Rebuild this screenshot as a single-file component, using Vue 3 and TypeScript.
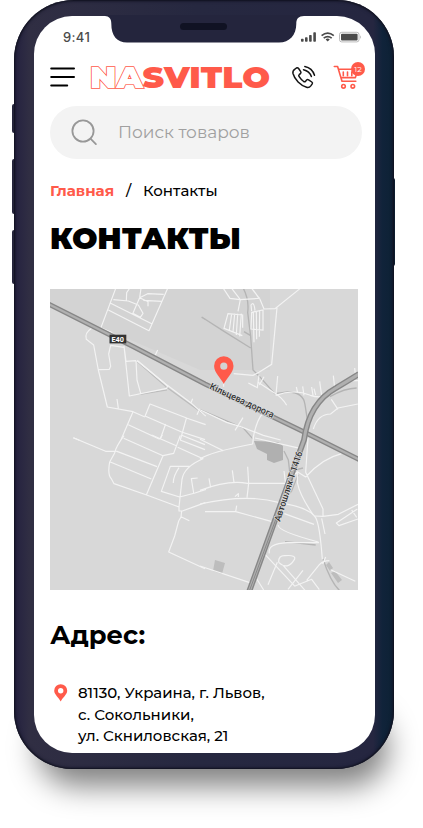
<script setup lang="ts">
interface Crumb {
  label: string
  home: boolean
}

const crumbs: Crumb[] = [
  { label: 'Главная', home: true },
  { label: 'Контакты', home: false },
]
const address: string[] = ['81130, Украина, г. Львов,', 'с. Сокольники,', 'ул. Скниловская, 21']
const cartCount = 12
</script>

<template>
  <main class="stage">
    <div class="shadow"></div>
    <i class="key key-mute"></i>
    <i class="key key-up"></i>
    <i class="key key-down"></i>
    <i class="key key-power"></i>
    <div class="phone">
      <div class="screen">
        <div class="status">
          <span class="time">9:41</span>
          <svg class="signals" width="62" height="12" viewBox="300 31 62 12">
            <g fill="#4a4a4a">
              <rect x="301" y="38.7" width="2.6" height="3" rx=".7" />
              <rect x="305" y="37.2" width="2.6" height="4.5" rx=".7" />
              <rect x="309.1" y="35" width="2.6" height="6.7" rx=".7" />
              <rect x="313.3" y="32.2" width="2.6" height="9.5" rx=".7" />
              <path d="M325.6 39.4q2-1.6 4.200 0l-2.100 2.200z" />
              <rect x="341" y="33.7" width="16.6" height="6.8" rx="1" />
            </g>
            <g fill="none" stroke="#4a4a4a" stroke-width="1.7">
              <path d="M321.600 35.700q6.100-5.200 12.200 0M323.700 38.200q4-3.300 8 0" />
            </g>
            <rect x="339.5" y="32.3" width="19.5" height="9.6" rx="2.2" fill="none" stroke="#aaa" stroke-width=".8" />
            <path d="M360 35.300q1.700 1.700 0 3.600z" fill="#aaa" />
          </svg>
        </div>

        <header class="header">
          <svg class="menu" width="26" height="22" viewBox="0 0 26 22" stroke="#000" stroke-width="2" stroke-linecap="round">
            <path d="M1.200 2.600H24M1.200 11H24M1.200 19.500H17.200" />
          </svg>
          <svg class="logo" width="182" height="40" viewBox="90 57 182 40">
            <text x="90" y="88" textLength="53" lengthAdjust="spacingAndGlyphs" class="logo-outline">NA</text>
            <text x="142.5" y="88.3" textLength="127.5" lengthAdjust="spacingAndGlyphs" class="logo-solid">SVITLO</text>
          </svg>
          <svg class="call" width="26" height="26" viewBox="291 64 26 26" fill="none" stroke="#151515" stroke-width="1.5" stroke-linecap="round" stroke-linejoin="round">
            <path d="M294.600 69.400l1.800-1.400q1.300-.7 2.200.5l2.100 3.200q.7 1.100-.3 2l-1.200 1q-.8.7-.2 1.700 2 3.200 4.700 5.100 1.100.7 1.900-.3l1-1.100q.9-1 2-.3l3.200 2.200q1.100.8.4 1.900l-1.400 2q-1.600 2.100-4.200 1.400-4.700-1.300-8.500-5.200-3.900-4.100-5.100-8.600-.6-2.500 1.600-4.100z" />
            <path d="M304.800 66.600q7.400 1.600 9.700 8.600M303.500 69.700q6 1.400 7.900 6.900" />
          </svg>
          <div class="cart">
            <svg width="26" height="26" viewBox="333 64 26 26" fill="none" stroke="#ff5a4a" stroke-width="1.6" stroke-linecap="round" stroke-linejoin="round">
              <path d="M334.300 66.500h3.300l4.400 14.800h13.800M339 69.300h19M358 69.300l-2.600 8.300h-14" />
              <path d="M343.300 72v3.800M347.500 72v3.800M351.800 72v3.800" />
              <circle cx="343.5" cy="86.3" r="1.8" />
              <circle cx="352.8" cy="86.3" r="1.8" />
            </svg>
            <span class="badge">{{ cartCount }}</span>
          </div>
        </header>

        <div class="search">
          <svg width="28" height="28" viewBox="0 0 28 28" fill="none" stroke="#989898" stroke-width="1.8" stroke-linecap="round">
            <circle cx="12" cy="12" r="10.6" />
            <path d="M19.700 19.900l5.200 5.200" />
          </svg>
          <span class="placeholder">Поиск товаров</span>
        </div>

        <nav class="crumbs">
          <template v-for="(crumb, index) in crumbs" :key="crumb.label">
            <span v-if="index > 0" class="slash">/</span>
            <span :class="crumb.home ? 'crumb-home' : 'crumb-here'">{{ crumb.label }}</span>
          </template>
        </nav>

        <h1 class="title">КОНТАКТЫ</h1>

        <svg class="map" width="308" height="301" viewBox="50 289 308 301">
          <rect x="50" y="289" width="308" height="301" fill="#d8d8d8" />
          <path d="M50 289H270V370H200L50 305z" fill="#d3d3d3" />
          <g fill="#b0b0b0">
            <path d="M254 441l24 1 5 4v14l-9 3-7-3v-6l-10-5z" />
            <path d="M215 560l10 3-3 11-9-3zM326 565l3-3 4 6-3 3zM331 573l4-2 7 9-4 3z" fill="#bdbdbd" />
          </g>

          <g transform="translate(45 285) scale(.33333)" fill="none" stroke-linejoin="round">
            <g stroke="#bcbcbc" stroke-width="3.5">
              <path d="M275 228L365 307 430 354 480 390M284 328l82-13M470 97l12 7" />
            </g>
            <g stroke="#f3f3f3" stroke-width="3.5">
              <path d="M167 130L213 8M205 44l45 4 30 12 14 25-8 12-24-13M288 10l-4 28-20 46M244 48l1-25 10-15M284 38l25 12v14M284 38l24-12 48 2M295 46l56 3M368 10L312 137 190 75M197 55l123 61" />
              <path d="M140 130q-22 14-16 33l22 17 14 75 27 111 77 14 36 16M160 254l33-1 4-9-6-37 6-26 40 6M237 183l6 46 30-2M237 183l16 150 112-23 3-7-93-76M273 228l3 57 12 43M220 370l-4-28" />
              <path d="M277 226l90 75 70 52 45 40M438 353l5-12M456 389l8-18M300 394l15-37 110 42M264 380l-36 84M300 393l110 48 70 23M362 417l-16 45M424 400l-18 65M250 419l94 44M424 399l58 20M85 458l18 8M330 212l8-17M170 130l29 12 10 10" />
            </g>
          </g>

          <g transform="translate(200 285) scale(.33333)" fill="none">
            <g stroke="#b4b4b4" stroke-width="4">
              <path d="M5 96l67 43 80 50M130 10q18 35 13 72l9 73 7 100 20 20 45 51 39-5q47 0 52 38l11 70M132 140l20 12M390 335q43-25 80-26" />
              <path d="M0 374l130 55 28 32" />
            </g>
            <g stroke="#f3f3f3" stroke-width="3.5">
              <path d="M70 10l20 30 30 4 58-4-23-30M95 10l26 34-7 35M178 38l14 34 33-1 75-60M160 15l15 22M231 68l-16 170-38 24-18 9-58-5M177 270l-5 38-27-14M174 292l45 29q27 15 41 40M192 275l-14 25M228 329l5-56M72 130l12-44 44 4v38M84 86l-12 44 55 22M95 86l-7 49M104 86l-5 55M113 86l-4 64M124 86l-5 68M155 82l34-7v60l-36-3zM160 82l2 90M169 80l1 83M179 77l-1 78M155 78l-2-18q9-13 12 17" />
              <path d="M227 331q57-20 104 0 24 8 41 2M289 306l4 18M308 304l4 27M335 306l4 25M342 311l5 19M359 289l6 44M400 272l4 37M464 249l3 27M394 343l20 30M340 432q14-45 52-45l22-18 60-12M71 305l0-15M159 461q11-59 31-77M105 436l24-38M0 374l80 38 40 12 70 27 52 14M474 287h-26" />
            </g>
          </g>

          <g transform="translate(45 435) scale(.33333)" fill="none" stroke="#f3f3f3" stroke-width="3.5" stroke-linejoin="round">
            <path d="M85 8l97 41h28M237 2q-25 34-28 52l-15 27q-7 38 5 50l8 15 98 34 97 36v12l10 0 69-25M304 180L354 62 236 10M210 47l126 48M196 81l123 51M354 62l32-7 20-54M398 37l76 34q-57 24-63 62l-9 83M410 1l70 28M405 15l75 29M346 10l6-10M320 0l74 32M434 94h-58l-27 75 55 17 46-12 33-11M402 98q-18 27-17 46M446 174l-7-43 19-2M410 228l-2 18-7 12-12 45-18 48 109 50M408 245l25 12" />
          </g>

          <g transform="translate(200 435) scale(.33333)" fill="none">
            <g stroke="#b5b5b5" stroke-width="4">
              <path d="M252 48l13 27 4 34 40-10M294 120l-20 50-22 18M255 320l92 10M369 372q22 67 49 94" />
            </g>
            <g stroke="#f3f3f3" stroke-width="3.5" stroke-linejoin="round">
              <path d="M0 72q30-21 158-45l3-26M165 9l135 31M0 13l70 34M0 166q85-32 142-21h115M0 207q140-32 239-4 90 15 108 45 12 20 20 125M15 230h92l120 33M107 230l3-18M32 158l-5-28M102 143l-5-37M141 188l5-43-3-50M105 185l10-9v10" />
              <path d="M324 10l-7 102 52 110v22l-25-1M252 108l5 40 35-38 25 16q50-56 108-70M292 112v31q8 40 48 97M253 236l89 32M235 270q-4 18 120 51M369 244l46-6 59-30M365 250l10 47M208 355q-6-29 54-32h95M0 393l165 55M195 358l90 96M163 420l28 45M232 382l-28 67M236 382q-1-22 20-20 34-3 27 12-20 33-47 8M250 392l65 74M264 463l45-57M285 453l50-20 23 31M320 436l38-47q12-12 30-12M377 366l-9 21M392 404l74 35M472 222l-63 42 8 8 57-20M455 225l15 22" />
            </g>
          </g>

          <g fill="none">
            <path d="M48 303.700L134 347 205 384 302 431 362 461" stroke="#878787" stroke-width="5" />
            <path d="M48 303.700L134 347 205 384 302 431 362 461" stroke="#b0b0b0" stroke-width="2.2" />
            <path d="M249 592L304 440q5-37 32-52 10-6 23-14" stroke="#878787" stroke-width="5.8" />
            <path d="M249 592L304 440q5-37 32-52 10-6 23-14" stroke="#b0b0b0" stroke-width="3" />
            <path d="M249 592L277 516" stroke="#777" stroke-width=".7" />
          </g>
          <rect x="109.5" y="334.7" width="16.8" height="8.7" fill="#333" />
          <text x="111.5" y="341.5" class="shield" textLength="12.5" lengthAdjust="spacingAndGlyphs">E40</text>
          <text class="road" transform="translate(209 388.500) rotate(25)" textLength="70" lengthAdjust="spacingAndGlyphs">Кільцева дорога</text>
          <text class="road" transform="translate(280 522) rotate(-72)" textLength="73" lengthAdjust="spacingAndGlyphs">Автошлях Т 1416</text>
          <path d="M223.800 384c-2.400-5.200-9.700-11.500-9.700-18.100a9.700 9.700 0 0 1 19.400 0c0 6.600-7.300 12.900-9.700 18.100zM223.800 362.600a3.600 3.600 0 1 0 0 7.200 3.600 3.600 0 0 0 0-7.200z" fill="#ff5a4a" fill-rule="evenodd" />
        </svg>

        <h2 class="subtitle">Адрес:</h2>
        <div class="address">
          <svg width="14" height="18" viewBox="0 0 14 18">
            <path d="M6.700 17.500C5 13.800.2 10.500.2 6.700a6.500 6.500 0 0 1 13 0c0 3.800-4.800 7.100-6.500 10.800zM6.700 4a2.700 2.700 0 1 0 0 5.400 2.700 2.700 0 0 0 0-5.400z" fill="#ff5a4a" fill-rule="evenodd" />
          </svg>
          <p><span v-for="line in address" :key="line">{{ line }}</span></p>
        </div>
      </div>
      <svg class="notch" width="200" height="28" viewBox="105 15 200 28">
        <path d="M105 15v1c4 .2 6.300 2.600 6.300 7.500C111.300 36 117 42.500 127 42.500h152c10.500 0 17.300-7.500 17.300-18.800 0-5 2.300-7.500 7.700-7.700v-1z" fill="#24253d" />
        <rect x="180" y="23" width="47" height="7" rx="3.500" fill="#101223" />
      </svg>
    </div>
  </main>
</template>

<style>
body {
  background: #fff;
  overflow: hidden;
}
</style>

<style scoped>
.stage {
  position: relative;
  box-sizing: border-box;
  width: 423px;
  height: 828px;
  padding-left: 14px;
  overflow: hidden;
  background: #fff;
  font-family: Montserrat, Inter, "Noto Sans", sans-serif;
  color: #000;
}
.shadow {
  position: absolute;
  left: 38px;
  top: 710px;
  width: 350px;
  height: 76px;
  border-radius: 38px;
  background: rgba(0, 0, 0, 0.5);
  filter: blur(15px);
}
.key {
  position: absolute;
  left: 12px;
  width: 5px;
  border-radius: 2px;
  background: #25243b;
}
.key-mute { top: 104px; height: 29px; }
.key-up { top: 159px; height: 55px; }
.key-down { top: 230px; height: 54px; }
.key-power { left: 390px; top: 178px; width: 5px; height: 88px; background: #0c1c2e; }
.phone {
  position: relative;
  box-sizing: border-box;
  width: 380px;
  height: 769px;
  padding: 16px 19.500px 16px 20px;
  border-radius: 60px 57px 58px 58px;
  background: linear-gradient(90deg, #242140 0, #302e43 4%, #262840 48%, #252640 94.500%, #10233a 97%, #0d2134 100%);
  box-shadow: inset 0 0 2px 1px #10111e, inset 0 0 4px #191b30;
}
.screen {
  box-sizing: border-box;
  height: 737px;
  padding: 0 12px 0 16px;
  border-radius: 38px;
  overflow: hidden;
  background: #fff;
}
.notch {
  position: absolute;
  left: 91px;
  top: 15px;
}
.status {
  display: flex;
  justify-content: space-between;
  align-items: center;
  height: 41px;
  padding: 0 1px 0 13px;
}
.time {
  font: 500 13px/16px Inter, sans-serif;
  letter-spacing: 0.35px;
  color: #4a4a4a;
}
.header {
  display: flex;
  align-items: center;
  height: 40px;
}
.logo {
  margin-left: 14px;
  overflow: visible;
}
.logo-outline,
.logo-solid {
  font: 900 31px Montserrat, Inter, sans-serif;
  fill: #ff5a4a;
}
.logo-outline {
  fill: #fff;
  stroke: #ff5a4a;
  stroke-width: 1.600px;
  paint-order: stroke;
}
.call {
  margin-left: 19px;
}
.cart {
  position: relative;
  display: flex;
  margin-left: 16px;
}
.badge {
  position: absolute;
  left: 18px;
  top: -2px;
  width: 14px;
  height: 14px;
  border-radius: 50%;
  background: #ff5a4a;
  color: #fff;
  font-size: 8px;
  line-height: 14px;
  text-align: center;
}
.search {
  display: flex;
  align-items: center;
  box-sizing: border-box;
  width: 312px;
  height: 53px;
  margin-top: 9px;
  padding-left: 21px;
  border-radius: 27px;
  background: #f3f3f3;
}
.placeholder {
  margin-left: 19px;
  padding-bottom: 1px;
  font-size: 17px;
  color: #a0a0a0;
}
.crumbs {
  display: flex;
  height: 20px;
  margin-top: 21px;
  font-size: 15px;
  line-height: 21px;
}
.crumb-home {
  width: 64px;
  font-weight: 700;
  color: #ff5a4a;
}
.slash {
  width: 17px;
  padding-left: 12px;
  font-weight: 500;
}
.crumb-here {
  font-weight: 500;
}
.title {
  height: 40px;
  margin: 19px 0 0;
  font-size: 30px;
  line-height: 39px;
  font-weight: 900;
}
.map {
  display: block;
  margin-top: 30px;
}
.shield {
  font: 700 6.500px Roboto, sans-serif;
  fill: #fff;
}
.road {
  font: 500 9.200px Roboto, sans-serif;
  fill: #333;
  stroke: #e2e2e2;
  stroke-width: 1.300px;
  paint-order: stroke;
}
.subtitle {
  height: 32px;
  margin: 29px 0 0;
  font-size: 25.700px;
  line-height: 32px;
  font-weight: 700;
}
.address {
  display: flex;
  margin: 32px 0 0 4px;
}
.address svg {
  margin-top: 1px;
}
.address p {
  display: flex;
  flex-direction: column;
  margin: 0 0 0 10px;
  font-size: 14.950px;
  line-height: 21.500px;
  font-weight: 500;
  white-space: nowrap;
}
</style>
